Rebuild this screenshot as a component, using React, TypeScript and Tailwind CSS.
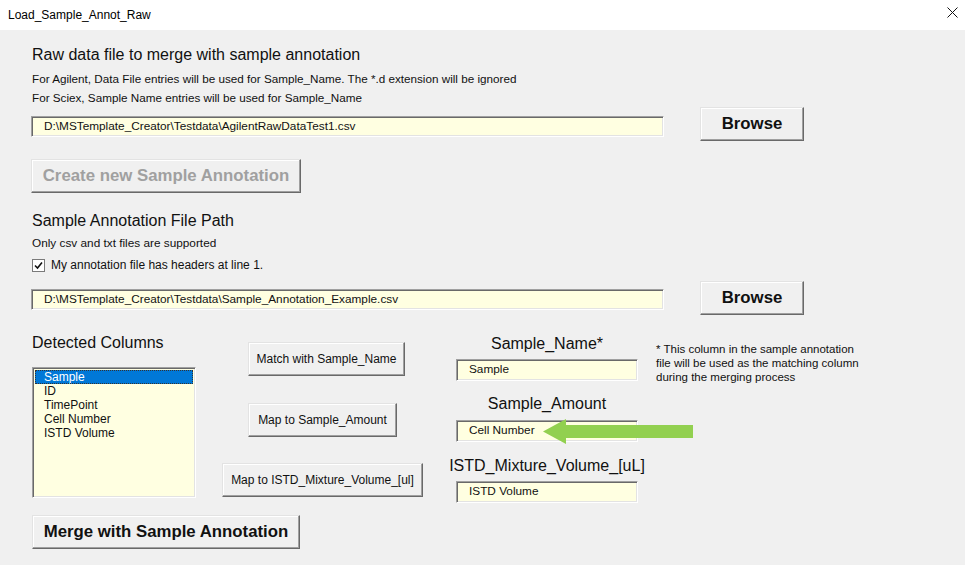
const raised =
  "border border-t-[#e3e3e3] border-l-[#e3e3e3] border-r-[#696969] border-b-[#696969] bg-[#f0f0f0] shadow-[inset_-1px_-1px_0_#a0a0a0,inset_1px_1px_0_#ffffff]";
const sunken =
  "border border-t-[#a0a0a0] border-l-[#a0a0a0] border-r-[#ffffff] border-b-[#ffffff] shadow-[inset_1px_1px_0_#696969,inset_-1px_-1px_0_#e3e3e3] bg-[#ffffe1]";

function TextBox(props: { value: string; className: string }) {
  return (
    <div className={`${sunken} ${props.className} flex items-center pl-[12px] text-[11.8px] text-[#111]`}>
      {props.value}
    </div>
  );
}

function Button(props: { label: string; className: string; bold?: boolean; disabled?: boolean }) {
  return (
    <div
      className={`${raised} ${props.className} flex items-center justify-center whitespace-nowrap ${
        props.bold ? "text-[16.8px] font-bold" : "text-[12px]"
      } ${props.disabled ? "text-[#a0a0a0]" : "text-[#111]"}`}
    >
      {props.label}
    </div>
  );
}

const columns = ["Sample", "ID", "TimePoint", "Cell Number", "ISTD Volume"];

export default function App() {
  return (
    <div className="w-[965px] h-[565px] overflow-hidden bg-[#f0f0f0] font-['Liberation_Sans',sans-serif] text-[#111]">
      {/* title bar */}
      <div className="h-[30px] bg-white flex items-center justify-between pl-[8px] pr-[7px]">
        <span className="text-[12px] text-black">Load_Sample_Annot_Raw</span>
        <svg width="11" height="11" viewBox="0 0 11 11" className="mt-[-5px]">
          <path d="M0.5 0.5 L10.5 10.5 M10.5 0.5 L0.5 10.5" stroke="#111" strokeWidth="1" fill="none" />
        </svg>
      </div>

      <div className="pl-[31px] pt-[15px]">
        <div className="text-[16px] leading-[20px] pl-[1px]">Raw data file to merge with sample annotation</div>
        <div className="mt-[4px] text-[11.7px] leading-[19px] pl-[1px]">
          For Agilent, Data File entries will be used for Sample_Name. The *.d extension will be ignored
        </div>
        <div className="text-[11.7px] leading-[19px] pl-[1px]">For Sciex, Sample Name entries will be used for Sample_Name</div>

        <div className="flex items-start">
          <TextBox
            value="D:\MSTemplate_Creator\Testdata\AgilentRawDataTest1.csv"
            className="mt-[9px] w-[633px] h-[21px]"
          />
          <Button label="Browse" bold className="ml-[36px] w-[104px] h-[34px]" />
        </div>

        <Button label="Create new Sample Annotation" bold disabled className="mt-[18px] w-[270px] h-[34px]" />

        <div className="mt-[18px] text-[16px] leading-[20px] pl-[1px]">Sample Annotation File Path</div>
        <div className="mt-[3px] text-[11.8px] leading-[19px] pl-[1px]">Only csv and txt files are supported</div>
        <div className="mt-[3px] h-[18px] flex items-center pl-[1px] text-[12px]">
          <div className="w-[13px] h-[13px] bg-white border border-[#7a7a7a] flex items-center justify-center">
            <svg width="9" height="9" viewBox="0 0 9 9">
              <path d="M1 4.5 L3.5 7 L8 1.5" stroke="#111" strokeWidth="1.6" fill="none" />
            </svg>
          </div>
          <span className="ml-[6px]">My annotation file has headers at line 1.</span>
        </div>

        <div className="mt-[7px] flex items-start">
          <TextBox
            value="D:\MSTemplate_Creator\Testdata\Sample_Annotation_Example.csv"
            className="mt-[8px] w-[633px] h-[21px]"
          />
          <Button label="Browse" bold className="ml-[36px] w-[104px] h-[34px]" />
        </div>

        {/* lower section */}
        <div className="relative ml-[1px] mt-[16px] flex items-start">
          <div className="w-[164px] flex flex-col">
            <div className="mt-[2px] text-[16px] leading-[20px]">Detected Columns</div>
            <div className={`${sunken} mt-[14px] h-[131px] pt-[2px] px-[2px] text-[12px]`}>
              {columns.map((c, i) => (
                <div
                  key={c}
                  className={`h-[14px] leading-[14px] pl-[9px] ${
                    i === 0 ? "bg-[#0078d7] text-white outline-1 outline-dotted outline-[#333] -outline-offset-1" : ""
                  }`}
                >
                  {c}
                </div>
              ))}
            </div>
          </div>

          <div className="ml-[26px] w-[201px] flex flex-col items-start">
            <Button label="Match with Sample_Name" className="mt-[11px] ml-[26px] w-[157px] h-[34px]" />
            <Button label="Map to Sample_Amount" className="mt-[27px] ml-[26px] w-[149px] h-[34px]" />
            <Button label="Map to ISTD_Mixture_Volume_[ul]" className="mt-[26px] w-[201px] h-[34px]" />
          </div>

          <div className="ml-[33px] w-[182px] flex flex-col items-center">
            <div className="mt-[3px] text-[16px] leading-[20px] whitespace-nowrap">Sample_Name*</div>
            <TextBox value="Sample" className="mt-[5px] w-[182px] h-[22px]" />
            <div className="mt-[13px] text-[16px] leading-[20px] whitespace-nowrap">Sample_Amount</div>
            <TextBox value="Cell Number" className="mt-[6px] w-[182px] h-[22px]" />
            <div className="mt-[14px] text-[16px] leading-[20px] whitespace-nowrap">ISTD_Mixture_Volume_[uL]</div>
            <TextBox value="ISTD Volume" className="mt-[5px] w-[182px] h-[22px]" />
          </div>

          <div className="ml-[18px] mt-[11px] text-[11.5px] leading-[14px] whitespace-nowrap">
            <div>* This column in the sample annotation</div>
            <div>file will be used as the matching column</div>
            <div>during the merging process</div>
          </div>

          <svg
            className="absolute left-[511px] top-[88px]"
            width="151"
            height="26"
            viewBox="0 0 151 26"
          >
            <polygon points="0,12.5 23,0 23,6 150,6 150,19 23,19 23,25" fill="#92d050" />
          </svg>
        </div>

        <Button label="Merge with Sample Annotation" bold className="mt-[12px] ml-[1px] w-[268px] h-[34px]" />
      </div>
    </div>
  );
}
